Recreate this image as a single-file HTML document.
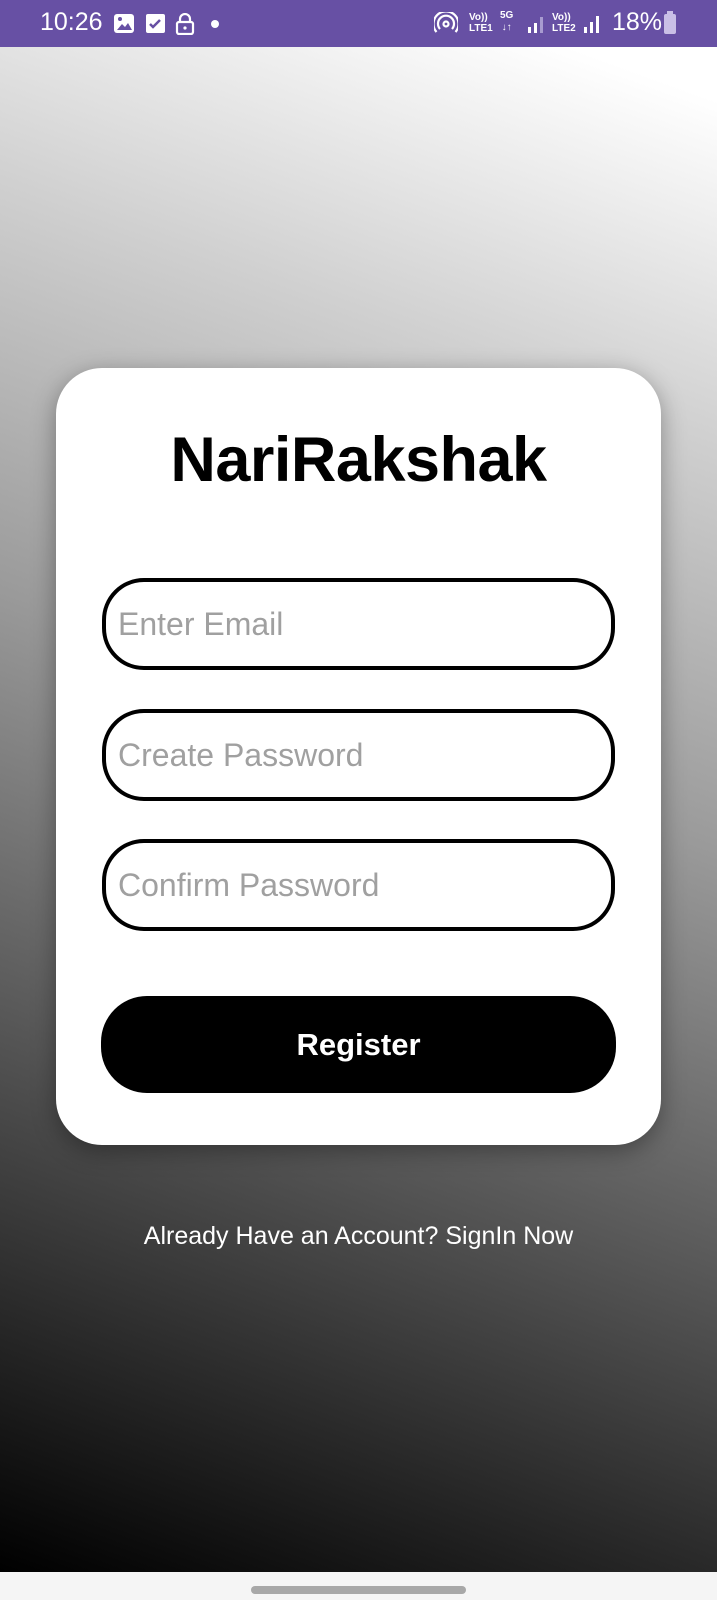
<!DOCTYPE html>
<html><head><style>
*{margin:0;padding:0;box-sizing:border-box}
body{width:717px;height:1600px;overflow:hidden;font-family:"Liberation Sans",Roboto,sans-serif;position:relative;background:#f5f5f5}
.sb{position:absolute;left:0;top:0;width:717px;height:47px;background:#6750a4;color:#fff}
.bg{position:absolute;left:0;top:47px;width:717px;height:1525px;background:linear-gradient(200deg,#ffffff 3%,#d0d0d0 22%,#9a9a9a 45%,#5a5a5a 68%,#2a2a2a 85%,#000 100%)}
.card{position:absolute;left:56px;top:368px;width:605px;height:777px;background:#fff;border-radius:46px;box-shadow:0 6px 24px rgba(0,0,0,.35)}
h1{position:absolute;left:56px;width:605px;top:424px;text-align:center;font-size:63px;font-weight:bold;color:#000;letter-spacing:-0.5px}
.in{position:absolute;left:102px;width:513px;height:92px;border:4px solid #000;border-radius:42px;font-size:32px;color:#a0a0a0;padding-left:12px;line-height:84px}
.btn{position:absolute;left:101px;top:996px;width:515px;height:97px;background:#000;border-radius:46px;color:#fff;font-size:31px;font-weight:bold;text-align:center;line-height:97px}
.lk{position:absolute;left:0;width:717px;top:1222px;text-align:center;color:#fff;font-size:25px}
.nav{position:absolute;left:251px;top:1586px;width:215px;height:8px;border-radius:4px;background:#a8a8a8}
</style></head><body>
<div class="sb">
<span style="position:absolute;left:40px;top:8px;font-size:25px">10:26</span>
<svg style="position:absolute;left:114px;top:13px" width="110" height="22">
<rect x="0" y="1" width="20" height="19" rx="3" fill="#fff"/><path d="M3 17l5-6 3 3 3-4 4 7z" fill="#6750a4"/><circle cx="6" cy="6" r="2" fill="#6750a4"/>
<rect x="32" y="1" width="19" height="19" rx="2" fill="#fff"/><path d="M36 11l3 3 7-7" stroke="#6750a4" stroke-width="2.5" fill="none"/>
<rect x="63" y="9" width="16" height="12" rx="2" fill="none" stroke="#fff" stroke-width="2.2"/><path d="M66 9V6a5 5 0 0 1 10 0v3" fill="none" stroke="#fff" stroke-width="2.2"/><circle cx="71" cy="15" r="1.6" fill="#fff"/>
<circle cx="101" cy="11" r="4" fill="#fff"/>
</svg>
<svg style="position:absolute;left:434px;top:12px" width="24" height="22"><circle cx="12" cy="12" r="2.5" fill="none" stroke="#fff" stroke-width="2.2"/><path d="M6 17a8 8 0 1 1 12 0M2.5 20a12.5 12.5 0 1 1 19 0" fill="none" stroke="#fff" stroke-width="2.2"/></svg>
<span style="position:absolute;left:469px;top:12px;font-size:10px;line-height:11px;font-weight:bold">Vo))<br>LTE1</span>
<span style="position:absolute;left:500px;top:10px;font-size:10px;line-height:12px;font-weight:bold;text-align:center">5G<br>↓↑</span>
<svg style="position:absolute;left:527px;top:14px" width="20" height="20"><rect x="1" y="13" width="3" height="6" fill="#fff"/><rect x="7" y="9" width="3" height="10" fill="#fff"/><rect x="13" y="3" width="3" height="16" fill="#a89bd0"/></svg>
<span style="position:absolute;left:552px;top:12px;font-size:10px;line-height:11px;font-weight:bold">Vo))<br>LTE2</span>
<svg style="position:absolute;left:583px;top:12px" width="22" height="22"><rect x="1" y="15" width="3" height="6" fill="#fff"/><rect x="7" y="10" width="3" height="11" fill="#fff"/><rect x="13" y="4" width="3" height="17" fill="#fff"/></svg>
<span style="position:absolute;left:612px;top:8px;font-size:25px">18%</span>
<svg style="position:absolute;left:663px;top:11px" width="14" height="24"><rect x="4" y="0" width="6" height="3" fill="#c9bfe6"/><rect x="1" y="3" width="12" height="20" rx="2" fill="#c9bfe6"/></svg>
</div>
<div class="bg"></div>
<div class="card"></div>
<h1>NariRakshak</h1>
<div class="in" style="top:578px">Enter Email</div>
<div class="in" style="top:709px">Create Password</div>
<div class="in" style="top:839px">Confirm Password</div>
<div class="btn">Register</div>
<div class="lk">Already Have an Account? SignIn Now</div>
<div class="nav"></div>
</body></html>
